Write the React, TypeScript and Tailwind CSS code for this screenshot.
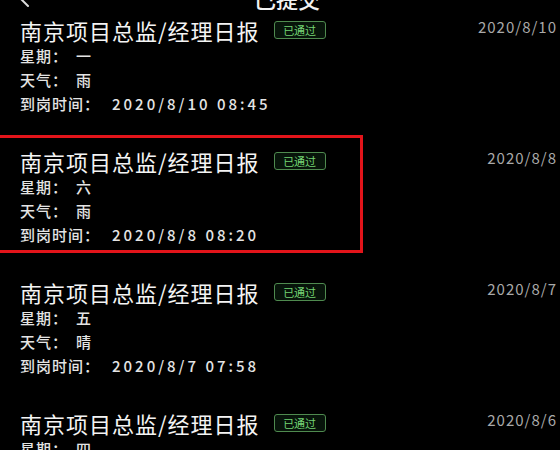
import React from 'react';

const REPORTS = [
  { id: 1, week: '一', weather: '雨', arrive: '2020/8/10 08:45', date: '2020/8/10' },
  { id: 2, week: '六', weather: '雨', arrive: '2020/8/8 08:20', date: '2020/8/8', marked: true },
  { id: 3, week: '五', weather: '晴', arrive: '2020/8/7 07:58', date: '2020/8/7' },
  { id: 4, week: '四', weather: '晴', arrive: '2020/8/6 08:12', date: '2020/8/6' },
];

const Line = ({ label, value, wide }: { label: string; value: string; wide?: boolean }) => (
  <div className="flex h-[24px] items-center text-[15px] font-medium text-[#e4e4e4]">
    <span className="tracking-[1px]">{label}</span>
    <span className={wide ? 'ml-[12px] tracking-[3px]' : 'ml-[8px]'}>{value}</span>
  </div>
);

export default function App() {
  return (
    <div className="h-[450px] w-[560px] overflow-hidden bg-black font-['Noto_Sans_CJK_SC','Noto_Sans',sans-serif]">
      {/* Header, mostly scrolled off the top */}
      <div className="-mt-[20px] flex h-[36px] items-center px-[18px]">
        <svg width="14" height="20" viewBox="0 0 14 20" className="text-[#dcdcdc]">
          <path d="M2 10 L10 18" stroke="currentColor" strokeWidth="2" strokeLinecap="round" fill="none" />
        </svg>
        <div className="flex-1 text-center text-[22px] font-medium text-[#f2f2f2]">已提交</div>
      </div>

      <ul>
        {REPORTS.map(r => (
          <li key={r.id} className="pb-[31px] pl-[20px] pr-[3px]">
            <div className="relative">
              {r.marked && (
                <div className="absolute -left-[30px] -top-[12px] -bottom-[6px] w-[373px] border-[3px] border-[#e3141a]" />
              )}
              <div className="flex items-start justify-between">
                <div className="flex h-[28px] items-center">
                  <span className="text-[22px] leading-[28px] tracking-[1px] text-[#f4f4f4]">南京项目总监/经理日报</span>
                  <span className="ml-[14px] flex h-[18px] w-[52px] items-center justify-center rounded-[3px] border border-[#4f8a4f] bg-[#07140a] text-[11px] leading-none text-[#74d474]">
                    已通过
                  </span>
                </div>
                <span className="text-[15px] leading-[22px] tracking-[1px] text-[#a9a9a9]">{r.date}</span>
              </div>
              <Line label="星期：" value={r.week} />
              <Line label="天气：" value={r.weather} />
              <Line label="到岗时间：" value={r.arrive} wide />
            </div>
          </li>
        ))}
      </ul>
    </div>
  );
}
